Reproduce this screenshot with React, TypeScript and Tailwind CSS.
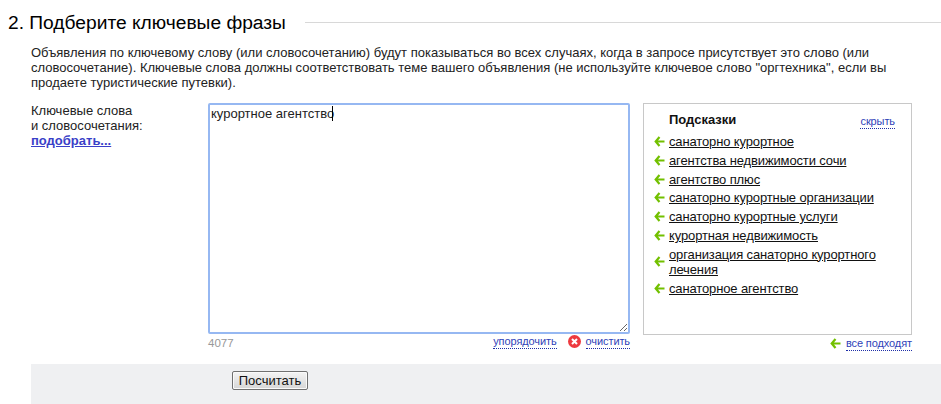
const Arrow = ({ className = "" }: { className?: string }) => (
  <svg width="11" height="11" viewBox="0 0 11 11" className={`shrink-0 ${className}`}>
    <path d="M5.5 1 L1.7 5.5 L5.5 10 M2.5 5.5 H10.5" fill="none" stroke="#72c000" strokeWidth="2.2" />
  </svg>
);

const hints = [
  "санаторно курортное",
  "агентства недвижимости сочи",
  "агентство плюс",
  "санаторно курортные организации",
  "санаторно курортные услуги",
  "курортная недвижимость",
  "организация санаторно курортного лечения",
  "санаторное агентство",
];

const dotted = "text-[#2f3fb8] border-b border-dotted border-[#1f2fa8] text-[11px] leading-[13px] tracking-[-0.1px]";

export default function App() {
  return (
    <div className="w-[941px] h-[404px] overflow-hidden bg-white text-black text-[13px] leading-[15px] font-['Liberation_Sans',Arial,sans-serif]">
      <div className="flex items-center pl-2 pt-[11px] h-[34px]">
        <h2 className="text-[19.2px] leading-[22px] whitespace-nowrap">2. Подберите ключевые фразы</h2>
        <div className="ml-[19px] flex-1 h-px bg-[#d8d8d8]" />
      </div>
      <p className="ml-[31px] mt-[11px] w-[880px] text-[#222]">
        Объявления по ключевому слову (или словосочетанию) будут показываться во всех случаях, когда в запросе присутствует это слово (или
        словосочетание). Ключевые слова должны соответствовать теме вашего объявления (не используйте ключевое слово "оргтехника", если вы
        продаете туристические путевки).
      </p>
      <div className="flex mt-[13px] ml-[31px]">
        <div className="w-[177px] text-[#222]">
          <div>Ключевые слова</div>
          <div>и словосочетания:</div>
          <a className="font-bold underline text-[#3a3fc8]">подобрать...</a>
        </div>
        <div className="w-[422px]">
          <div className="relative h-[231px]">
            <textarea
              readOnly
              defaultValue="курортное агентство"
              className="block w-full h-full border-2 border-[#96b8f2] rounded-[2px] pl-[1px] pr-[2px] pt-[1px] text-[13px] leading-[15px] text-[#222] outline-none font-['Liberation_Sans',Arial,sans-serif]"
            />
            <div className="absolute left-[124px] top-[3px] w-px h-[15px] bg-black" />
          </div>
          <div className="flex items-start h-[15px] mt-[1px]">
            <span className="text-[#999] text-[11.5px] leading-[14px] mt-[1px]">4077</span>
            <a className={`ml-auto ${dotted}`}>упорядочить</a>
            <svg width="13" height="13" viewBox="0 0 13 13" className="ml-[11px] shrink-0">
              <circle cx="6.5" cy="6.5" r="6.5" fill="#ee3a3f" />
              <path d="M4 4 L9 9 M9 4 L4 9" stroke="#fff" strokeWidth="2" />
            </svg>
            <a className={`ml-[5px] ${dotted}`}>очистить</a>
          </div>
        </div>
        <div className="ml-[13px] w-[269px]">
          <div className="h-[232px] border border-[#c8c8c8] pl-[10px] pr-[16px] pt-[8px]">
            <div className="flex items-start pl-[15px]">
              <b className="text-[#111]">Подсказки</b>
              <a className={`ml-auto mt-[3px] ${dotted}`}>скрыть</a>
            </div>
            <ul className="mt-[5px] flex flex-col gap-[3.8px] tracking-[-0.13px]">
              {hints.map((h) => (
                <li key={h} className="flex items-center gap-[4px]">
                  <Arrow />
                  <a className="underline text-[#111]">{h}</a>
                </li>
              ))}
            </ul>
          </div>
          <div className="flex justify-end items-center mt-[1px] h-[15px]">
            <Arrow />
            <a className={`ml-[5px] ${dotted}`}>все подходят</a>
          </div>
        </div>
      </div>
      <div className="ml-[31px] mt-[13px] h-[40px] bg-[#eff0f2] pl-[201px] pt-[7px]">
        <button className="h-[19px] w-[76px] border border-[#707070] rounded-[2px] bg-gradient-to-b from-[#f4f4f4] to-[#d6d6d6] text-[13px] leading-[15px] text-[#111] shadow-[inset_0_0_0_1px_#fafafa]">
          Посчитать
        </button>
      </div>
    </div>
  );
}
